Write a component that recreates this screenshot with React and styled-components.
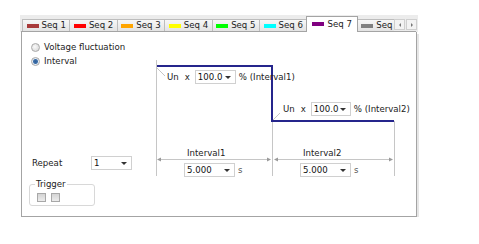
import React from 'react'
import styled, { createGlobalStyle } from 'styled-components'

const GlobalStyle = createGlobalStyle`
  html, body {
    margin: 0;
    padding: 0;
    background: #fff;
  }
  body {
    font-family: "DejaVu Sans", Verdana, sans-serif;
    font-size: 8.6px;
    line-height: 11px;
    color: #222;
  }
`

const seqs = [
  { id: 1, color: '#a83a3a' },
  { id: 2, color: '#ff0000' },
  { id: 3, color: '#ffa500' },
  { id: 4, color: '#ffff00' },
  { id: 5, color: '#00ff00' },
  { id: 6, color: '#00ffff' },
  { id: 7, color: '#800080', active: true },
  { id: 8, color: '#808080' },
]

function Select({ value, width }) {
  return (
    <SelectBox $width={width}>
      <span>{value}</span>
      <Caret />
    </SelectBox>
  )
}

function App() {
  return (
    <>
      <GlobalStyle />
      <Widget>
        <TabStrip>
          <TabList>
            {seqs.map(function (s) {
              return (
                <Tab key={s.id} $active={s.active}>
                  <Swatch $color={s.color} />
                  <span>Seq {s.id}</span>
                </Tab>
              )
            })}
          </TabList>
          <ScrollBtn>
            <Arrow $dir="left" />
          </ScrollBtn>
          <ScrollBtn>
            <Arrow $dir="right" />
          </ScrollBtn>
        </TabStrip>
        <Panel>
          <LeftCol>
            <RadioRow>
              <Radio />
              <span>Voltage fluctuation</span>
            </RadioRow>
            <RadioRow>
              <Radio $checked />
              <span>Interval</span>
            </RadioRow>
            <RepeatRow>
              <RepeatLabel>Repeat</RepeatLabel>
              <Select value="1" width={41} />
            </RepeatRow>
            <Trigger>
              <legend>Trigger</legend>
              <CheckRow>
                <Check />
                <Check />
              </CheckRow>
            </Trigger>
          </LeftCol>
          <Diagram>
            <svg width="256" height="120" viewBox="0 0 256 120">
              <g stroke="#c6c6c6" strokeWidth="1" fill="none">
                <path d="M0.5 0V116" />
                <path d="M116.5 61V116" />
                <path d="M238.5 61V116" />
                <path d="M1 8L9 16" />
                <path d="M117 60L124 53" />
                <path d="M2 99.5H114" />
                <path d="M119 99.5H236" />
              </g>
              <g fill="#9a9a9a">
                <polygon points="1,99.5 5,97.5 5,101.5" />
                <polygon points="115,99.5 111,97.5 111,101.5" />
                <polygon points="118,99.5 122,97.5 122,101.5" />
                <polygon points="237,99.5 233,97.5 233,101.5" />
              </g>
              <path d="M1 6H116V61H238" stroke="#25258c" strokeWidth="2" fill="none" />
            </svg>
            <LevelRow $left={11} $top={10}>
              <Un>Un</Un>
              <Times>x</Times>
              <Select value="100.0" width={41} />
              <Pct>% (Interval1)</Pct>
            </LevelRow>
            <LevelRow $left={127} $top={42}>
              <Un>Un</Un>
              <Times>x</Times>
              <Select value="100.0" width={40} />
              <Pct>% (Interval2)</Pct>
            </LevelRow>
            <IntervalBox $left={28} $top={88}>
              <IntervalName>Interval1</IntervalName>
              <SecRow>
                <Select value="5.000" width={51} />
                <span>s</span>
              </SecRow>
            </IntervalBox>
            <IntervalBox $left={144} $top={88}>
              <IntervalName>Interval2</IntervalName>
              <SecRow>
                <Select value="5.000" width={51} />
                <span>s</span>
              </SecRow>
            </IntervalBox>
          </Diagram>
        </Panel>
      </Widget>
    </>
  )
}

const Widget = styled.div`
  margin: 15px 0 0 20px;
  width: 398px;
`

const TabStrip = styled.div`
  position: relative;
  display: flex;
  align-items: flex-end;
  height: 17px;
  background: #ececec;

  &::after {
    content: '';
    position: absolute;
    left: 1px;
    right: 2px;
    bottom: 0;
    height: 1px;
    background: #a4a4a4;
  }
`

const TabList = styled.div`
  display: flex;
  align-items: flex-end;
  height: 17px;
  width: 373px;
  margin-left: 2px;
  overflow: hidden;
`

const Tab = styled.div`
  position: relative;
  z-index: ${p => (p.$active ? 1 : 0)};
  flex: none;
  display: flex;
  align-items: center;
  gap: 3px;
  box-sizing: border-box;
  height: ${p => (p.$active ? '16px' : '13px')};
  padding: ${p => (p.$active ? '0 5px 1px' : '0 3.5px')};
  margin-right: -1px;
  border: 1px solid ${p => (p.$active ? '#a4a4a4' : '#bdbdbd')};
  border-bottom: ${p => (p.$active ? 'none' : '1px solid #a4a4a4')};
  background: ${p => (p.$active ? '#fff' : 'linear-gradient(#f7f7f7, #e3e3e3)')};
  color: #222;
  white-space: nowrap;
`

const Swatch = styled.span`
  width: 12px;
  height: 4px;
  background: ${p => p.$color};
`

const ScrollBtn = styled.div`
  flex: none;
  display: flex;
  align-items: center;
  justify-content: center;
  box-sizing: border-box;
  width: 11px;
  height: 11px;
  margin: 0 1px 2px 0;
  border: 1px solid #cfcfcf;
  background: #f3f3f3;
`

const Arrow = styled.span`
  width: 0;
  height: 0;
  border-top: 2px solid transparent;
  border-bottom: 2px solid transparent;
  ${p =>
    p.$dir === 'left'
      ? 'border-right: 2px solid #777;'
      : 'border-left: 2px solid #777;'}
`

const Panel = styled.div`
  display: flex;
  box-sizing: border-box;
  width: 396px;
  height: 185px;
  margin-left: 1px;
  border: 1px solid #a4a4a4;
  border-top: none;
  background: #fff;
  box-shadow: 2px 2px 0 #e6e6e6;
`

const LeftCol = styled.div`
  flex: none;
  width: 134px;
  display: flex;
  flex-direction: column;
  padding: 8px 0 10px;
  box-sizing: border-box;
`

const RadioRow = styled.div`
  display: flex;
  align-items: center;
  gap: 4px;
  height: 14px;
  padding-left: 9px;
  white-space: nowrap;
`

const Radio = styled.span`
  box-sizing: border-box;
  width: 9px;
  height: 9px;
  border-radius: 50%;
  border: 1px solid #a9a9a9;
  background: ${p =>
    p.$checked
      ? 'radial-gradient(circle, #2f5f9a 0, #3d6fa8 2px, #e8eef5 3px, #d6d6d6 100%)'
      : 'radial-gradient(circle at 40% 40%, #fafafa, #d2d2d2)'};
`

const RepeatRow = styled.div`
  display: flex;
  align-items: center;
  margin-top: auto;
  padding-left: 10px;
`

const RepeatLabel = styled.span`
  width: 59px;
`

const Trigger = styled.fieldset`
  box-sizing: border-box;
  width: 66px;
  margin: 9px 0 0 7px;
  padding: 3px 7px 3px;
  border: 1px solid #d8d8d8;
  border-radius: 3px;
  min-inline-size: 0;

  legend {
    padding: 0 1px;
    margin-left: -2px;
    line-height: 11px;
  }
`

const CheckRow = styled.div`
  display: flex;
  gap: 5px;
`

const Check = styled.span`
  box-sizing: border-box;
  width: 9px;
  height: 9px;
  border: 1px solid #a8a8a8;
  background: linear-gradient(#d4d4d4, #ececec);
`

const Diagram = styled.div`
  position: relative;
  flex: none;
  width: 256px;
  height: 120px;
  margin-top: 28px;

  svg {
    display: block;
  }
`

const LevelRow = styled.div`
  position: absolute;
  left: ${p => p.$left}px;
  top: ${p => p.$top}px;
  display: flex;
  align-items: center;
  white-space: nowrap;
`

const Un = styled.span`
  margin-right: 6px;
`

const Times = styled.span`
  margin-right: 5px;
`

const Pct = styled.span`
  margin-left: 3px;
`

const SelectBox = styled.div`
  display: flex;
  align-items: center;
  justify-content: space-between;
  box-sizing: border-box;
  width: ${p => p.$width}px;
  height: 14px;
  padding: 0 4px 0 2px;
  border: 1px solid #d0d0d0;
  background: #fff;
  color: #111;
`

const Caret = styled.span`
  width: 0;
  height: 0;
  border-left: 3px solid transparent;
  border-right: 3px solid transparent;
  border-top: 3px solid #333;
`

const IntervalBox = styled.div`
  position: absolute;
  left: ${p => p.$left}px;
  top: ${p => p.$top}px;
  display: flex;
  flex-direction: column;
  gap: 4px;
`

const IntervalName = styled.span`
  margin-left: 3px;
`

const SecRow = styled.div`
  display: flex;
  align-items: center;
  gap: 3px;
  color: #555;
`

export default App
